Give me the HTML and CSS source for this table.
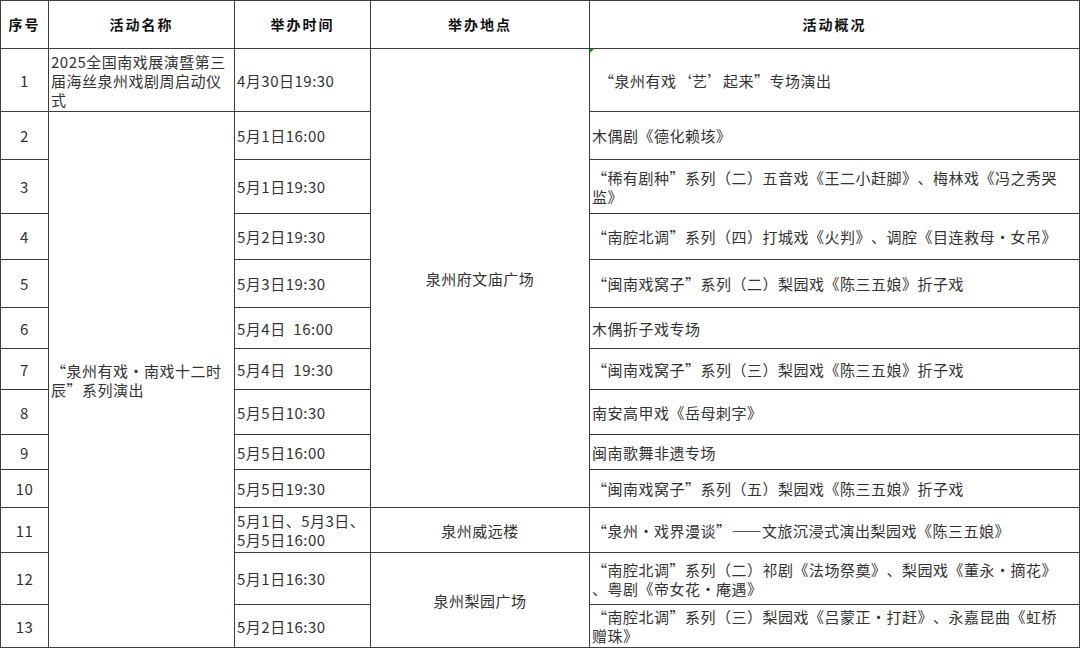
FILE: index.html
```html
<!DOCTYPE html>
<html lang="zh-CN">
<head>
<meta charset="utf-8">
<title>活动安排</title>
<link rel="stylesheet" href="styles.css">
</head>
<body>
<table class="sched">
  <colgroup>
    <col class="c-num">
    <col class="c-name">
    <col class="c-time">
    <col class="c-venue">
    <col class="c-desc">
  </colgroup>
  <thead>
    <tr class="r-head">
      <th>序号</th>
      <th>活动名称</th>
      <th>举办时间</th>
      <th>举办地点</th>
      <th>活动概况</th>
    </tr>
  </thead>
  <tbody>
    <tr class="r1">
      <td class="num">1</td>
      <td>2025全国南戏展演暨第三届海丝泉州戏剧周启动仪式</td>
      <td>4月30日19:30</td>
      <td class="venue" rowspan="10">泉州府文庙广场</td>
      <td class="desc indent"><span class="flag"></span>“泉州有戏‘艺’起来”专场演出</td>
    </tr>
    <tr class="r2">
      <td class="num">2</td>
      <td rowspan="12">“泉州有戏·南戏十二时辰”系列演出</td>
      <td>5月1日16:00</td>
      <td class="desc">木偶剧《德化赖垓》</td>
    </tr>
    <tr class="r3">
      <td class="num">3</td>
      <td>5月1日19:30</td>
      <td class="desc">“稀有剧种”系列（二）五音戏《王二小赶脚》、梅林戏《冯之秀哭<br>监》</td>
    </tr>
    <tr class="r4">
      <td class="num">4</td>
      <td>5月2日19:30</td>
      <td class="desc">“南腔北调”系列（四）打城戏《火判》、调腔《目连救母·女吊》</td>
    </tr>
    <tr class="r5">
      <td class="num">5</td>
      <td>5月3日19:30</td>
      <td class="desc">“闽南戏窝子”系列（二）梨园戏《陈三五娘》折子戏</td>
    </tr>
    <tr class="r6">
      <td class="num">6</td>
      <td>5月4日&nbsp;&nbsp;16:00</td>
      <td class="desc">木偶折子戏专场</td>
    </tr>
    <tr class="r7">
      <td class="num">7</td>
      <td>5月4日&nbsp;&nbsp;19:30</td>
      <td class="desc">“闽南戏窝子”系列（三）梨园戏《陈三五娘》折子戏</td>
    </tr>
    <tr class="r8">
      <td class="num">8</td>
      <td>5月5日10:30</td>
      <td class="desc">南安高甲戏《岳母刺字》</td>
    </tr>
    <tr class="r9">
      <td class="num">9</td>
      <td>5月5日16:00</td>
      <td class="desc">闽南歌舞非遗专场</td>
    </tr>
    <tr class="r10">
      <td class="num">10</td>
      <td>5月5日19:30</td>
      <td class="desc">“闽南戏窝子”系列（五）梨园戏《陈三五娘》折子戏</td>
    </tr>
    <tr class="r11">
      <td class="num">11</td>
      <td>5月1日、5月3日、<br>5月5日16:00</td>
      <td class="venue">泉州威远楼</td>
      <td class="desc">“泉州·戏界漫谈”——文旅沉浸式演出梨园戏《陈三五娘》</td>
    </tr>
    <tr class="r12">
      <td class="num">12</td>
      <td>5月1日16:30</td>
      <td class="venue" rowspan="2">泉州梨园广场</td>
      <td class="desc">“南腔北调”系列（二）祁剧《法场祭奠》、梨园戏《董永·摘花》<br>、粤剧《帝女花·庵遇》</td>
    </tr>
    <tr class="r13">
      <td class="num">13</td>
      <td>5月2日16:30</td>
      <td class="desc">“南腔北调”系列（三）梨园戏《吕蒙正·打赶》、永嘉昆曲《虹桥<br>赠珠》</td>
    </tr>
  </tbody>
</table>
</body>
</html>
```
FILE: styles.css
```css
html, body {
  margin: 0;
  background: #ffffff;
}

body {
  font-family: "Noto Sans CJK SC", "Noto Sans", sans-serif;
  color: #333333;
}

.sched {
  border-collapse: collapse;
  table-layout: fixed;
  width: 1079px;
  font-size: 15px;
  letter-spacing: 0.5px;
  line-height: 19px;
  text-spacing-trim: space-all;
}

.c-num { width: 48px; }
.c-name { width: 186px; }
.c-time { width: 136px; }
.c-venue { width: 219px; }
.c-desc { width: 490px; }

.sched th,
.sched td {
  border: 1px solid #3d3d3d;
  padding: 0 2px;
  vertical-align: middle;
  text-align: left;
  overflow: hidden;
}

.sched th {
  font-size: 14px;
  font-weight: 700;
  letter-spacing: 2px;
  text-align: center;
  color: #111111;
}

.sched td.num,
.sched td.venue {
  text-align: center;
}

.sched td.desc {
  position: relative;
  padding-right: 6px;
}

.sched td.indent {
  padding-left: 9px;
}

.flag {
  position: absolute;
  left: 0;
  top: 0;
  width: 0;
  height: 0;
  border-top: 4px solid #1a9a1a;
  border-right: 4px solid transparent;
}

.r-head { height: 48px; }
.r1 { height: 63px; }
.r2 { height: 48px; }
.r3 { height: 54px; }
.r4 { height: 46px; }
.r5 { height: 48px; }
.r6 { height: 41px; }
.r7 { height: 41px; }
.r8 { height: 45px; }
.r9 { height: 35px; }
.r10 { height: 38px; }
.r11 { height: 45px; }
.r12 { height: 52px; }
.r13 { height: 43px; }
```
